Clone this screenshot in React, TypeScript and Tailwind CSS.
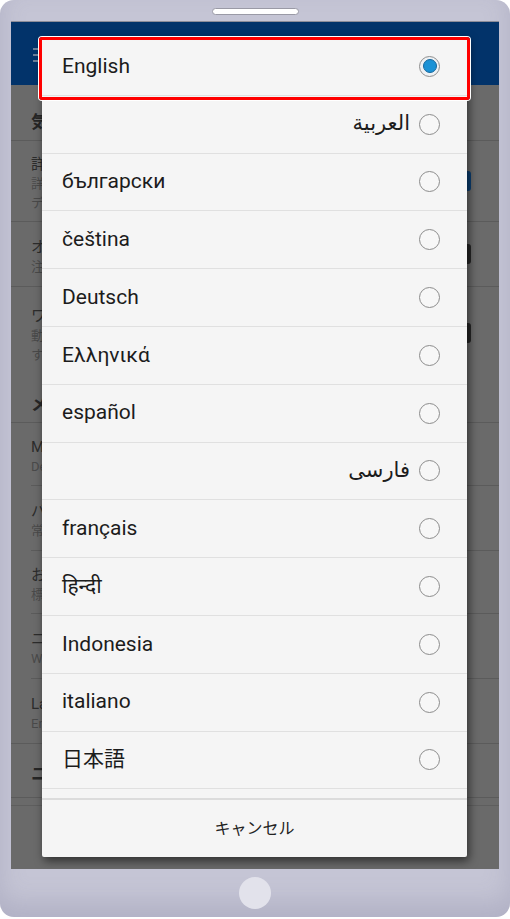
const languages: { label: string; rtl?: boolean; selected?: boolean }[] = [
  { label: "English", selected: true },
  { label: "العربية", rtl: true },
  { label: "български" },
  { label: "čeština" },
  { label: "Deutsch" },
  { label: "Ελληνικά" },
  { label: "español" },
  { label: "فارسی", rtl: true },
  { label: "français" },
  { label: "हिन्दी" },
  { label: "Indonesia" },
  { label: "italiano" },
  { label: "日本語" },
];

type Pref = { title: string; lines: string[]; h: string; toggle?: "on" | "off" };

const sectionOne: Pref[] = [
  { title: "詳細表示", lines: ["詳細な天気情報を表示します", "データ通信量が増えます"], h: "h-[81px]", toggle: "on" },
  { title: "オフライン表示", lines: ["注意報・警報のみ表示"], h: "h-[65px]", toggle: "off" },
  { title: "ワンタッチ更新", lines: ["動作中に自動で更新", "する"], h: "h-[92px]", toggle: "off" },
];

const sectionTwo: Pref[] = [
  { title: "Mode", lines: ["Default"], h: "h-[63px]" },
  { title: "バックグラウンド更新", lines: ["常に更新する"], h: "h-[65px]" },
  { title: "お知らせ音", lines: ["標準"], h: "h-[63px]" },
  { title: "ニュース配信元", lines: ["Web"], h: "h-[65px]" },
  { title: "Language", lines: ["English"], h: "h-[65px]" },
];

function Radio({ on }: { on?: boolean }) {
  if (on) {
    return (
      <span className="flex h-[21px] w-[21px] shrink-0 items-center justify-center rounded-full border border-[#8f8f8f] bg-[#eef1f4]">
        <span className="h-[14px] w-[14px] rounded-full border border-[#16679c] bg-[#1b92d6]" />
      </span>
    );
  }
  return <span className="h-[21px] w-[21px] shrink-0 rounded-full border-[1.5px] border-[#8c8c8c] bg-[#f7f7f7]" />;
}

function PrefRow({ p, last }: { p: Pref; last?: boolean }) {
  return (
    <div className={`relative flex ${p.h} flex-col justify-center pl-[20px] pr-4 pt-[4px] ${last ? "" : "border-b border-[#5b5b5b]"}`}>
      <div className="text-[15px] leading-[20px] text-[#2c2c2c]">{p.title}</div>
      {p.lines.map((l) => (
        <div key={l} className="text-[13px] leading-[19px] text-[#4a4a4a]">
          {l}
        </div>
      ))}
      {p.toggle && (
        <span
          className={`absolute right-[28px] top-1/2 h-[20px] w-[36px] -translate-y-1/2 rounded-[3px] ${
            p.toggle === "on" ? "bg-[#0b3f72]" : "bg-[#262626]"
          }`}
        />
      )}
    </div>
  );
}

export default function App() {
  return (
    <div className="h-[919px] w-[510px] bg-white font-['Roboto','Noto_Sans','DejaVu_Sans','Noto_Sans_CJK_JP',sans-serif]">
      <div className="flex h-[917px] flex-col rounded-[14px] bg-[#c5c5d5] shadow-[inset_0_-14px_24px_rgba(120,120,150,0.25)]">
        <div className="flex h-[21px] shrink-0 justify-center pt-[8px]">
          <span className="h-[7px] w-[87px] rounded-full border border-[#9a9aa6] bg-white" />
        </div>

        <div className="relative mx-[11px] h-[848px] shrink-0 overflow-hidden border-t border-[#8d8d99] bg-[#6a6a6a]">
          <div className="flex h-[63px] items-center bg-[#02336a] pl-[22px] pt-[2px]">
            <div className="flex flex-col gap-[4px]">
              <span className="h-[2px] w-[18px] bg-[#6b7e98]" />
              <span className="h-[2px] w-[18px] bg-[#6b7e98]" />
              <span className="h-[2px] w-[18px] bg-[#6b7e98]" />
            </div>
          </div>

          <div className="flex h-[56px] items-end border-b border-[#5b5b5b] pb-[5px] pl-[20px] text-[17px] font-bold text-[#262626]">
            気象情報の設定
          </div>
          {sectionOne.map((p, i) => (
            <PrefRow key={p.title} p={p} last={i === sectionOne.length - 1} />
          ))}
          <div className="flex h-[44px] items-end border-b border-[#5b5b5b] pb-[5px] pl-[20px] text-[17px] font-bold text-[#262626]">
            メニュー
          </div>
          {sectionTwo.map((p, i) => (
            <div key={p.title} className={i === sectionTwo.length - 1 ? "" : "ml-[20px] [&>div]:pl-0"}>
              <PrefRow p={p} />
            </div>
          ))}
          <div className="flex h-[54px] items-end border-b border-[#5b5b5b] pb-[10px] pl-[20px] text-[17px] font-bold text-[#262626]">
            ニュース
          </div>
          <div className="h-[8px] border-b border-[#5e5e5e]" />

          <div className="absolute left-[31px] top-[14px] flex h-[821px] w-[425px] flex-col rounded-[2px] bg-[#f5f5f5] shadow-[2px_4px_10px_rgba(0,0,0,0.55)]">
            <div className="h-[762px] overflow-hidden pt-[2px]">
              {languages.map((lang) => (
                <div
                  key={lang.label}
                  className={`flex h-[57.8px] items-center border-b border-[#e0e0e0] pl-[20px] pr-[27px] text-[21px] text-[#1c1c1c] ${
                    lang.rtl ? "justify-end gap-[9px]" : "justify-between"
                  }`}
                >
                  <span dir={lang.rtl ? "rtl" : "ltr"}>{lang.label}</span>
                  <Radio on={lang.selected} />
                </div>
              ))}
              <div className="h-[57.8px]" />
            </div>
            <div className="flex flex-1 items-center justify-center border-t-2 border-[#dcdcdc] text-[16px] text-[#222]">
              キャンセル
            </div>

            <div className="absolute left-[-3px] top-[1px] h-[63px] w-[431px] rounded-[3px] border-[3px] border-[#ff0000] shadow-[0_0_0_1px_#ffffff]" />
          </div>
        </div>

        <div className="flex flex-1 items-center justify-center">
          <span className="h-[32px] w-[32px] rounded-full bg-[#e2e2eb]" />
        </div>
      </div>
    </div>
  );
}
